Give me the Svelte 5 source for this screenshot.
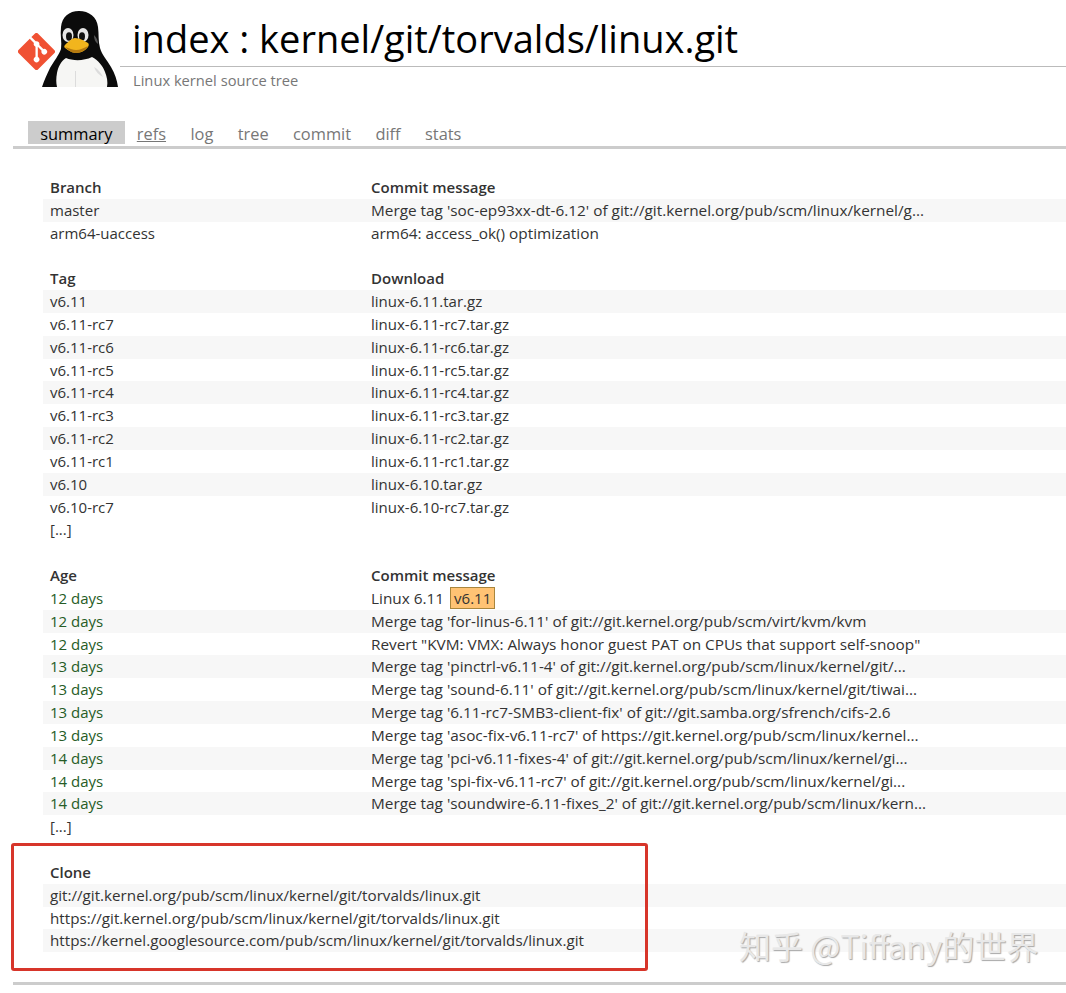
<script>
  const tabs = ['summary', 'refs', 'log', 'tree', 'commit', 'diff', 'stats'];

  const branches = [
    ['master', "Merge tag 'soc-ep93xx-dt-6.12' of git://git.kernel.org/pub/scm/linux/kernel/g..."],
    ['arm64-uaccess', 'arm64: access_ok() optimization'],
  ];

  const tags = ['6.11', '6.11-rc7', '6.11-rc6', '6.11-rc5', '6.11-rc4', '6.11-rc3', '6.11-rc2', '6.11-rc1', '6.10', '6.10-rc7'];

  const commits = [
    ['12 days', 'Linux 6.11'],
    ['12 days', "Merge tag 'for-linus-6.11' of git://git.kernel.org/pub/scm/virt/kvm/kvm"],
    ['12 days', 'Revert "KVM: VMX: Always honor guest PAT on CPUs that support self-snoop"'],
    ['13 days', "Merge tag 'pinctrl-v6.11-4' of git://git.kernel.org/pub/scm/linux/kernel/git/..."],
    ['13 days', "Merge tag 'sound-6.11' of git://git.kernel.org/pub/scm/linux/kernel/git/tiwai..."],
    ['13 days', "Merge tag '6.11-rc7-SMB3-client-fix' of git://git.samba.org/sfrench/cifs-2.6"],
    ['13 days', "Merge tag 'asoc-fix-v6.11-rc7' of https://git.kernel.org/pub/scm/linux/kernel..."],
    ['14 days', "Merge tag 'pci-v6.11-fixes-4' of git://git.kernel.org/pub/scm/linux/kernel/gi..."],
    ['14 days', "Merge tag 'spi-fix-v6.11-rc7' of git://git.kernel.org/pub/scm/linux/kernel/gi..."],
    ['14 days', "Merge tag 'soundwire-6.11-fixes_2' of git://git.kernel.org/pub/scm/linux/kern..."],
  ];

  const clones = [
    'git://git.kernel.org/pub/scm/linux/kernel/git/torvalds/linux.git',
    'https://git.kernel.org/pub/scm/linux/kernel/git/torvalds/linux.git',
    'https://kernel.googlesource.com/pub/scm/linux/kernel/git/torvalds/linux.git',
  ];
</script>

<div class="page">
  <header class="head">
    <div class="logo">
      <svg class="tux" viewBox="0 0 76 76" width="76" height="76">
        <path fill="#0b0b0b" d="M37 0c-10 0-17 6-18 16-1 8 1 15 0 22-2 6-7 12-11 19C5 63 2 70 0 76h76c-1-7-3-13-7-20-4-7-9-12-11-19-2-7-1-14-2-21C55 6 47 0 37 0z"/>
        <path fill="#f6f6f4" d="M24 47c-5 3-8 9-9 15-1 5-1 10 0 14h50c1-5 0-10-2-15-2-6-7-12-13-15-8 4-19 4-26 1z"/>
        <path fill="#dcdcdc" d="M33 60h1v16h-1zM52 56c4 2 7 6 9 10-4-2-7-5-9-10z"/>
        <path fill="#555" d="M52 24c3 3 4 6 4 9-3-2-4-5-4-9z"/>
        <ellipse cx="26" cy="24" rx="5.5" ry="7" fill="#e6e6e6"/>
        <ellipse cx="41" cy="24" rx="5.5" ry="7" fill="#e6e6e6"/>
        <ellipse cx="27" cy="25.5" rx="3" ry="4.2" fill="#111"/>
        <ellipse cx="40" cy="25.5" rx="3" ry="4.2" fill="#111"/>
        <path fill="#f2b51d" d="M33 27c-3 0-7 4-10 7-1 1-1 2 0 3 3 2 7 5 11 5 5 0 10-3 12-6 1-2 1-3 0-4-3-2-9-5-13-5z"/>
        <path fill="#b67a10" d="M23 36c4 1 8 3 11 3 4 0 8-2 12-4-2 4-7 7-12 7-4 0-8-3-11-6z"/>
      </svg>
      <svg class="git" viewBox="0 0 92 92" width="37" height="37">
        <path fill="#f05133" d="M90.156 41.965 50.036 1.848a5.918 5.918 0 0 0-8.372 0l-8.328 8.332 10.566 10.566a7.03 7.03 0 0 1 7.23 1.684 7.034 7.034 0 0 1 1.669 7.277l10.187 10.184a7.028 7.028 0 0 1 7.278 1.672 7.04 7.04 0 0 1 0 9.957 7.05 7.05 0 0 1-9.965 0 7.044 7.044 0 0 1-1.528-7.66l-9.5-9.497V59.36a7.04 7.04 0 0 1 1.86 1.339 7.04 7.04 0 0 1 0 9.957 7.04 7.04 0 0 1-9.957 0 7.04 7.04 0 0 1 0-9.957 7.06 7.06 0 0 1 2.304-1.539V33.926a7.049 7.049 0 0 1-3.82-9.234L29.242 14.272 1.73 41.777a5.925 5.925 0 0 0 0 8.371L41.852 90.27a5.925 5.925 0 0 0 8.37 0l39.934-39.934a5.925 5.925 0 0 0 0-8.371"/>
      </svg>
    </div>
    <div class="titles">
      <h1>index : kernel/git/torvalds/linux.git</h1>
      <p>Linux kernel source tree</p>
    </div>
  </header>

  <nav class="tabs">
    {#each tabs as tab, i}
      <span class="tab" class:active={i === 0} class:hover={i === 1}>{tab}</span>
    {/each}
  </nav>

  <main class="content">
    <div class="row title"><span>Branch</span><span>Commit message</span></div>
    {#each branches as b, i}
      <div class="row" class:odd={i % 2 === 0}><span>{b[0]}</span><span class="msg">{b[1]}</span></div>
    {/each}

    <div class="row"></div>
    <div class="row title"><span>Tag</span><span>Download</span></div>
    {#each tags as t, i}
      <div class="row" class:odd={i % 2 === 0}><span>v{t}</span><span>linux-{t}.tar.gz</span></div>
    {/each}
    <div class="row"><span>[...]</span></div>

    <div class="row"></div>
    <div class="row title"><span>Age</span><span>Commit message</span></div>
    {#each commits as c, i}
      <div class="row" class:even={i % 2 === 1}>
        <span class="age">{c[0]}</span>
        <span class="msg">{c[1]}{#if i === 0}<b class="deco">v6.11</b>{/if}</span>
      </div>
    {/each}
    <div class="row"><span>[...]</span></div>

    <div class="row"></div>
    <div class="row title"><span>Clone</span></div>
    {#each clones as url, i}
      <div class="row wide" class:odd={i % 2 === 0}><span class="url">{url}</span></div>
    {/each}
  </main>

  <div class="foot"></div>

  <div class="callout"></div>
  <div class="mark">知乎 @Tiffany的世界</div>
</div>

<style>
  :global(body) {
    margin: 0;
    background: #fff;
  }

  .page {
    position: relative;
    width: 1066px;
    height: 993px;
    overflow: hidden;
    font-family: "Open Sans", "Noto Sans", sans-serif;
    font-size: 15px;
    color: #333;
  }

  .head {
    display: flex;
    height: 96px;
    padding-left: 18px;
    padding-top: 11px;
    box-sizing: border-box;
  }

  .logo {
    position: relative;
    width: 102px;
    height: 76px;
    flex: none;
  }

  .tux {
    position: absolute;
    left: 24px;
    top: 0;
  }

  .git {
    position: absolute;
    left: 0;
    top: 22px;
  }

  .titles {
    flex: 1;
  }

  h1 {
    margin: 0;
    height: 55px;
    padding-left: 12px;
    border-bottom: 1px solid #bbb;
    font-size: 38px;
    font-weight: 400;
    line-height: 54px;
    color: #000;
    white-space: nowrap;
  }

  p {
    margin: 4px 0 0;
    padding-left: 13px;
    font-size: 14.7px;
    line-height: 18px;
    color: #777;
  }

  .tabs {
    display: flex;
    height: 25px;
    margin-top: 25px;
    margin-left: 13px;
    padding-left: 15px;
    border-bottom: 3px solid #ccc;
    font-size: 16.4px;
    line-height: 26px;
    color: #777;
  }

  .tab {
    padding: 0 12.2px;
    height: 23px;
  }

  .tab.active {
    background: #ccc;
    color: #000;
  }

  .tab.hover {
    text-decoration: underline;
  }

  .content {
    margin-top: 27px;
    margin-left: 43px;
  }

  .row {
    display: grid;
    grid-template-columns: 321px 1fr;
    height: 22.83px;
    padding-left: 7px;
    line-height: 22.83px;
    white-space: nowrap;
  }

  .row.wide {
    grid-template-columns: 1fr;
  }

  .row.odd,
  .row.even {
    background: #f7f7f7;
  }

  .title {
    font-weight: 600;
  }

  .msg {
    font-size: 15.35px;
  }

  .url {
    font-size: 15.2px;
  }

  .age {
    color: #265c26;
  }

  .deco {
    display: inline-block;
    margin-left: 6px;
    padding: 0 3px;
    height: 20px;
    line-height: 20px;
    background: #ffc374;
    border: 1px solid #a9863d;
    font-size: 15px;
    font-weight: 400;
    color: #333;
  }

  .foot {
    height: 3px;
    margin-top: 30px;
    margin-left: 13px;
    background: #ccc;
  }

  .callout {
    position: absolute;
    left: 11px;
    top: 843px;
    width: 631px;
    height: 122px;
    border: 3px solid #d7352a;
    border-radius: 3px;
  }

  .mark {
    position: absolute;
    left: 739px;
    top: 922px;
    font-family: "Noto Sans CJK SC", "Noto Sans", sans-serif;
    font-size: 32px;
    line-height: 46px;
    color: #e8e8e8;
    text-shadow: 1px 1px 1px #a8a8a8;
    white-space: nowrap;
  }
</style>
